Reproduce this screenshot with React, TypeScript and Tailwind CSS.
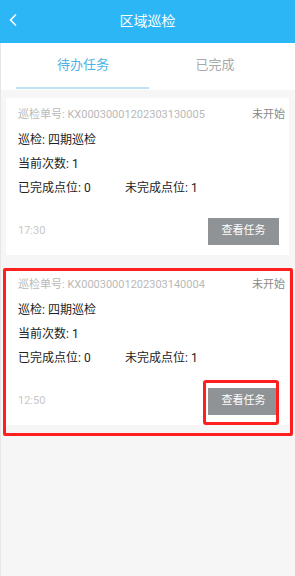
import { ChevronLeft } from "lucide-react";

type Task = { no: string; name: string; count: number; done: number; todo: number; time: string };

const tasks: Task[] = [
  { no: "KX00030001202303130005", name: "四期巡检", count: 1, done: 0, todo: 1, time: "17:30" },
  { no: "KX00030001202303140004", name: "四期巡检", count: 1, done: 0, todo: 1, time: "12:50" },
];

function TaskCard({ task, marked }: { task: Task; marked?: boolean }) {
  return (
    <div className="relative bg-white h-[157px] pt-[7px]">
      <div className="flex justify-between items-center h-[20px] pl-3 pr-[4px] text-[11px]">
        <span className="text-[#b9b9b9]">巡检单号: {task.no}</span>
        <span className="text-[#8a8a8a]">未开始</span>
      </div>
      <div className="mt-[3px] pl-3 text-[12px] text-[#222] leading-[24px]">
        <div>巡检: {task.name}</div>
        <div>当前次数: {task.count}</div>
        <div className="flex">
          <span className="w-[107px]">已完成点位: {task.done}</span>
          <span>未完成点位: {task.todo}</span>
        </div>
      </div>
      <div className="mt-[17px] flex justify-between items-center pl-3 pr-[10px]">
        <span className="text-[11px] text-[#c8c8c8]">{task.time}</span>
        <div className="relative">
          <button className="w-[71px] h-[27px] bg-[#8f9396] text-white text-[11px]">查看任务</button>
          {marked && (
            <div className="absolute left-[-5px] top-[-7px] w-[76px] h-[45px] border-[3px] border-[#ff1f1f] rounded-[3px]" />
          )}
        </div>
      </div>
      {marked && (
        <div className="absolute left-[-3px] right-[-4px] top-0 bottom-[-11px] border-[3px] border-[#ff1f1f] rounded-[2px]" />
      )}
    </div>
  );
}

export default function App() {
  return (
    <div
      className="w-[295px] h-[576px] bg-[#f6f6f6] flex flex-col overflow-hidden"
      style={{ fontFamily: "Roboto, 'Noto Sans CJK SC', sans-serif" }}
    >
      <div className="h-[43px] bg-[#2db6f5] flex items-center relative shrink-0">
        <ChevronLeft className="absolute left-[3px] top-[10px] text-white" size={20} strokeWidth={2} />
        <div className="flex-1 text-center text-white text-[14px]">区域巡检</div>
      </div>
      <div className="flex-1 flex flex-col border-l border-[#e6e6e6]">
        <div className="h-[47px] bg-white flex shrink-0">
          <div className="w-[148px] flex flex-col">
            <div className="flex-1 flex items-center justify-center text-[13px] text-[#4db4e6] pl-[16px]">待办任务</div>
            <div className="ml-[15px] h-[2px] bg-[#bfe2f4] mb-[1px]" />
          </div>
          <div className="flex-1 flex items-center justify-center text-[13px] text-[#a9a9a9] pb-[3px] pr-[14px]">已完成</div>
        </div>
        <div className="pt-[8px] px-[5px] pr-[6px] flex flex-col gap-[13px]">
          {tasks.map((t, i) => (
            <TaskCard key={t.no} task={t} marked={i === 1} />
          ))}
        </div>
      </div>
    </div>
  );
}
